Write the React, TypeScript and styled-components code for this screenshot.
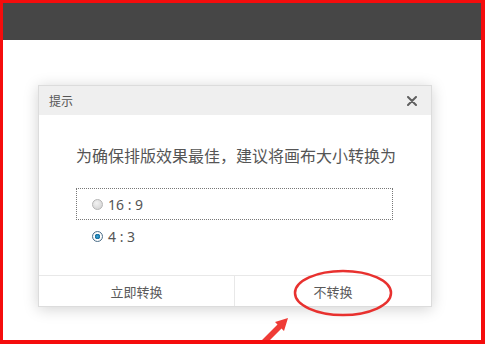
import React, { FC, useState } from 'react';
import styled, { createGlobalStyle } from 'styled-components';

const GlobalStyle = createGlobalStyle`
    html, body {
        margin: 0;
        padding: 0;
        background: #fff;
    }
    body {
        font-family: "Noto Sans CJK SC", "Noto Sans", sans-serif;
    }
`

const ratios = ['16 : 9', '4 : 3']

const App: FC = () => {
    const [selected, setSelected] = useState(1)

    return (<>
        <GlobalStyle />
        <FrameStyled>
            <ToolbarStyled />
            <CanvasStyled>
                <DialogStyled>
                    <DialogHeader>
                        <DialogTitle>提示</DialogTitle>
                        <CloseButton aria-label="close">
                            <svg width="10" height="10" viewBox="0 0 10 10">
                                <path d="M1 1 L9 9 M9 1 L1 9" stroke="#5f5f5f" strokeWidth="2" strokeLinecap="round" />
                            </svg>
                        </CloseButton>
                    </DialogHeader>

                    <DialogBody>
                        <MessageStyled>为确保排版效果最佳，建议将画布大小转换为</MessageStyled>
                        {ratios.map((ratio, i) =>
                            <OptionRow key={ratio} $focused={i === 0} onClick={() => setSelected(i)}>
                                <RadioDot $checked={selected === i} />
                                <OptionLabel>{ratio}</OptionLabel>
                            </OptionRow>
                        )}
                    </DialogBody>

                    <DialogFooter>
                        <FooterButton>立即转换</FooterButton>
                        <FooterButton>不转换</FooterButton>
                    </DialogFooter>
                </DialogStyled>

                {/* red annotation drawn over the screenshot */}
                <AnnotationLayer width="485" height="344" viewBox="0 0 485 344">
                    <ellipse cx="343" cy="293" rx="48" ry="22" fill="none" stroke="#e8312f" strokeWidth="2.5" />
                    <polygon
                        points="288,318 284,331 281.5,328.5 260,350 256,346 277.5,324.5 275,322"
                        fill="#ef3b36"
                    />
                </AnnotationLayer>
            </CanvasStyled>
        </FrameStyled>
    </>)
}

export default App

const FrameStyled = styled.div`
    box-sizing: border-box;
    width: 485px;
    height: 344px;
    border-style: solid;
    border-color: #f50d0d;
    border-width: 3px 4px 4px 3px;
    display: flex;
    flex-direction: column;
    overflow: hidden;
`

const ToolbarStyled = styled.div`
    height: 37px;
    flex-shrink: 0;
    background: #464646;
`

const CanvasStyled = styled.div`
    position: relative;
    flex: 1;
    background: #fff;
    padding: 45px 0 0 35px;
`

const DialogStyled = styled.div`
    box-sizing: border-box;
    width: 394px;
    height: 222px;
    background: #fff;
    border: 1px solid #dcdcdc;
    box-shadow: 0 2px 14px rgba(0, 0, 0, 0.18);
    display: flex;
    flex-direction: column;
`

const DialogHeader = styled.div`
    height: 29px;
    background: #efefef;
    display: flex;
    align-items: center;
    justify-content: space-between;
    padding: 0 14px 0 10px;
`

const DialogTitle = styled.span`
    font-size: 12px;
    color: #555;
`

const CloseButton = styled.span`
    display: flex;
    cursor: pointer;
`

const DialogBody = styled.div`
    flex: 1;
    padding: 30px 38px 0 37px;
`

const MessageStyled = styled.div`
    font-size: 16px;
    line-height: 20px;
    color: #555;
    margin-bottom: 23px;
    white-space: nowrap;
`

const OptionRow = styled.div<{ $focused: boolean }>`
    box-sizing: border-box;
    height: 32px;
    display: flex;
    align-items: center;
    gap: 5px;
    padding-left: 15px;
    border: 1px dotted ${p => p.$focused ? '#777' : 'transparent'};
    cursor: pointer;
`

const RadioDot = styled.span<{ $checked: boolean }>`
    box-sizing: border-box;
    width: 11px;
    height: 11px;
    border-radius: 50%;
    border: 1px solid ${p => p.$checked ? '#4c6f8a' : '#b5b5b5'};
    background: ${p => p.$checked
        ? 'radial-gradient(circle at 50% 50%, #3aa6d8 0, #1a6f9e 2.5px, #fff 3px, #e8e8e8 100%)'
        : 'radial-gradient(circle at 40% 35%, #f2f2f2 0, #cfcfcf 100%)'};
`

const OptionLabel = styled.span`
    font-family: "Noto Sans", "DejaVu Sans", sans-serif;
    font-size: 14px;
    color: #555;
`

const DialogFooter = styled.div`
    height: 30px;
    border-top: 1px solid #e8e8e8;
    display: grid;
    grid-template-columns: 195px 1fr;
`

const FooterButton = styled.div`
    display: flex;
    align-items: center;
    justify-content: center;
    font-size: 13px;
    color: #5a5a5a;
    cursor: pointer;

    & + & {
        border-left: 1px solid #e8e8e8;
    }
`

const AnnotationLayer = styled.svg`
    position: absolute;
    left: -3px;
    top: -40px;
    pointer-events: none;
`
